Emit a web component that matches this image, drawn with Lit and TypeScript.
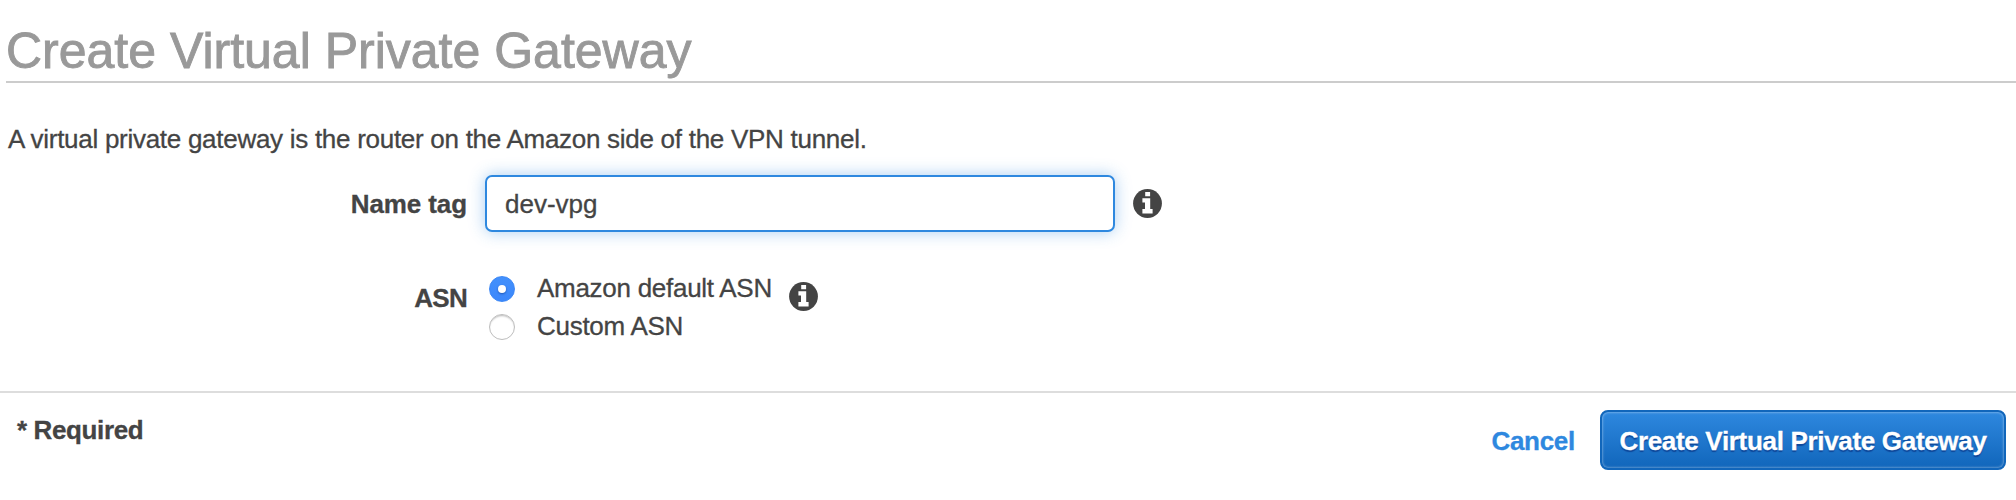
import { LitElement, html, css } from "lit";
import { customElement, property } from "lit/decorators.js";

@customElement("info-icon")
class InfoIcon extends LitElement {
  static styles = css`
    :host { display: block; width: 29px; height: 29px; flex: none; }
    .icon { display: block; }
  `;
  render() {
    return html`<svg class="icon" width="29" height="29" viewBox="0 0 29 29">
      <circle cx="14.5" cy="14.5" r="14.4" fill="#444" />
      <path fill="#fff" d="M12.2 3h4.9v4.2h-4.9zM9.4 9.2h7.8v10.8h2.4v4.4H9.4v-4.4h2.6v-6.4H9.4z" />
    </svg>`;
  }
}

@customElement("radio-option")
class RadioOption extends LitElement {
  @property({ type: Boolean }) checked = false;
  @property() label = "";
  static styles = css`
    :host { display: flex; align-items: center; height: 38px; }
    .dot {
      box-sizing: border-box; flex: none; width: 26px; height: 26px; border-radius: 50%;
      border: 1px solid #bdbdbd; background: #fff; margin-right: 22px;
      box-shadow: inset 0 2px 2px -1px rgba(0, 0, 0, 0.28);
      display: flex; align-items: center; justify-content: center;
    }
    .dot.on { background: linear-gradient(#4390fc, #3b87fb); border: 1px solid #3b87f6; box-shadow: none; }
    .pip { width: 8px; height: 8px; border-radius: 50%; background: #fff; box-shadow: 0 1px 2px rgba(0, 40, 120, 0.5); }
    .text { line-height: 36px; padding-bottom: 2px; white-space: nowrap; }
  `;
  render() {
    return html`<span class="dot ${this.checked ? "on" : ""}">${this.checked ? html`<span class="pip"></span>` : ""}</span>
      <span class="text">${this.label}</span>`;
  }
}

@customElement("app-root")
class AppRoot extends LitElement {
  static styles = css`
    :host {
      display: block; height: 500px; overflow: hidden; background: #fff; color: #444;
      font: 26px/30px "Liberation Sans", Arial, sans-serif;
      letter-spacing: -0.28px; -webkit-text-stroke: 0.3px;
    }
    .title {
      box-sizing: border-box; margin: 0 0 0 6px; height: 83px; padding-top: 21px;
      border-bottom: 2px solid #ccc; color: #999; letter-spacing: 0; -webkit-text-stroke: 0.9px;
      font-weight: 400; font-size: 50px; line-height: 60px;
    }
    .intro { margin: 0; padding: 41px 0 0 8px; height: 30px; }
    .row { display: flex; }
    .label { width: 467px; text-align: right; font-weight: 700; flex: none; }
    .name { height: 57px; margin-top: 21px; align-items: center; }
    .name .label { letter-spacing: -0.1px; }
    .field {
      box-sizing: border-box; width: 630px; height: 57px; margin: 0 18px;
      border: 2px solid #2e88df; border-radius: 7px; padding: 2px 18px 0;
      box-shadow: 0 0 16px rgba(46, 136, 223, 0.42);
      font: inherit; letter-spacing: 0; color: inherit; background: #fff; outline: none;
    }
    .asn { margin-top: 38px; }
    .asn .label { padding-top: 13px; letter-spacing: -0.7px; }
    .options { width: 282px; margin: 0 0 0 22px; }
    .asn info-icon { margin: 12px 0 0 18px; }
    .footer {
      display: flex; align-items: flex-start; margin-top: 45px;
      border-top: 2px solid #ddd; padding: 17px 10px 0 17px;
    }
    .required { font-weight: 700; margin-top: 5px; letter-spacing: -0.38px; }
    .cancel { margin: 16px 25px 0 auto; color: #2e88df; font-weight: 700; text-decoration: none; }
    .create {
      box-sizing: border-box; width: 406px; height: 60px; padding: 2px 0 0; white-space: nowrap;
      border: 2px solid #1166bb; border-radius: 8px; color: #fff;
      background: linear-gradient(#2e88df, #1166bb);
      box-shadow: inset 0 0 3px rgba(255, 255, 255, 0.6);
      text-shadow: 0 2px 1px rgba(0, 30, 110, 0.5);
      font: inherit; font-weight: 700; letter-spacing: -0.32px;
    }
  `;
  render() {
    return html`
      <h1 class="title">Create Virtual Private Gateway</h1>
      <p class="intro">A virtual private gateway is the router on the Amazon side of the VPN tunnel.</p>
      <div class="row name">
        <label class="label">Name tag</label>
        <input class="field" .value=${"dev-vpg"} />
        <info-icon></info-icon>
      </div>
      <div class="row asn">
        <span class="label">ASN</span>
        <div class="options">
          <radio-option checked label="Amazon default ASN"></radio-option>
          <radio-option label="Custom ASN"></radio-option>
        </div>
        <info-icon></info-icon>
      </div>
      <div class="footer">
        <span class="required">* Required</span>
        <a class="cancel">Cancel</a>
        <button class="create">Create Virtual Private Gateway</button>
      </div>
    `;
  }
}
